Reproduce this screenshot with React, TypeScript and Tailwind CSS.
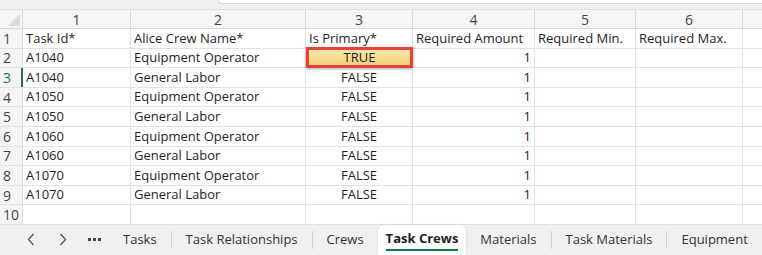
const cols = [
  { n: "1", w: "w-[108px]" },
  { n: "2", w: "w-[175px]" },
  { n: "3", w: "w-[107px]" },
  { n: "4", w: "w-[122px]" },
  { n: "5", w: "w-[101px]" },
  { n: "6", w: "w-[107px]" },
];

const rows = [
  ["Task Id*", "Alice Crew Name*", "Is Primary*", "Required Amount", "Required Min.", "Required Max."],
  ["A1040", "Equipment Operator", "TRUE", "1", "", ""],
  ["A1040", "General Labor", "FALSE", "1", "", ""],
  ["A1050", "Equipment Operator", "FALSE", "1", "", ""],
  ["A1050", "General Labor", "FALSE", "1", "", ""],
  ["A1060", "Equipment Operator", "FALSE", "1", "", ""],
  ["A1060", "General Labor", "FALSE", "1", "", ""],
  ["A1070", "Equipment Operator", "FALSE", "1", "", ""],
  ["A1070", "General Labor", "FALSE", "1", "", ""],
  ["", "", "", "", "", ""],
];

const tabs = ["Tasks", "Task Relationships", "Crews", "Task Crews", "Materials", "Task Materials", "Equipment"];

export default function App() {
  return (
    <div className="w-[762px] h-[255px] overflow-hidden bg-white text-[#1f1f1f] font-['Open_Sans',sans-serif] text-[13px] flex flex-col">
      {/* strip under the formula bar */}
      <div className="h-[10px] bg-[#f0f0f0] border-b border-[#e0e0e0] flex shrink-0">
        <div className="ml-[218px] flex-1 h-[4px] bg-white border-l border-b border-[#d6d6d6] rounded-bl-[6px]" />
      </div>

      {/* column headers */}
      <div className="flex h-[19px] bg-[#f5f5f5] border-b border-[#dadada] shrink-0">
        <div className="w-[23px] relative border-r border-[#dadada]">
          <div className="absolute right-[2px] bottom-[2px] w-0 h-0 border-l-[12px] border-l-transparent border-b-[12px] border-b-[#dcdcdc]" />
        </div>
        {cols.map((c) => (
          <div key={c.n} className={`${c.w} border-r border-[#dadada] flex items-center justify-center text-[#444] text-[14px]`}>
            {c.n}
          </div>
        ))}
        <div className="flex-1" />
      </div>

      {/* grid rows */}
      {rows.map((r, i) => (
        <div key={i} className="flex h-[19.6px] border-b border-[#e1e1e1] shrink-0">
          <div
            className={`w-[23px] bg-[#f5f5f5] flex items-center pl-[3px] text-[14px] ${
              i === 2 ? "text-[#217346] border-r-2 border-[#217346]" : "text-[#444] border-r border-[#dadada]"
            }`}
          >
            {i + 1}
          </div>
          {r.map((v, j) => (
            <div
              key={j}
              className={`${cols[j].w} border-r border-[#e1e1e1] flex items-center px-[3px] whitespace-nowrap relative ${
                i === 0 ? "" : j === 2 ? "justify-center" : j === 3 ? "justify-end" : ""
              }`}
            >
              {i === 1 && j === 2 ? (
                <div className="absolute left-[0px] right-[-1px] top-[-2px] bottom-[-1px] border-[3px] border-[#e8413c] shadow-[0_1px_3px_rgba(0,0,0,0.35)] flex items-center justify-center bg-[linear-gradient(#fbe6a9,#f5d27e)] text-[#1f1f1f]">
                  {v}
                </div>
              ) : (
                v
              )}
            </div>
          ))}
          <div className="flex-1" />
        </div>
      ))}

      {/* sheet tabs */}
      <div className="flex-1 bg-[#f0f0f0] flex items-stretch text-[13px] text-[#333] whitespace-nowrap">
        <div className="w-[15px] shrink-0" />
        <div className="w-[32px] shrink-0 flex items-center justify-center text-[#555]">
          <svg width="8" height="13" viewBox="0 0 8 13"><path d="M6.5 1 1.5 6.5 6.5 12" fill="none" stroke="currentColor" strokeWidth="1.3" /></svg>
        </div>
        <div className="w-[32px] shrink-0 flex items-center justify-center text-[#555]">
          <svg width="8" height="13" viewBox="0 0 8 13"><path d="M1.5 1 6.5 6.5 1.5 12" fill="none" stroke="currentColor" strokeWidth="1.3" /></svg>
        </div>
        <div className="w-[30px] shrink-0 flex items-center justify-center gap-[2px]">
          <span className="w-[3px] h-[3px] bg-[#444]" />
          <span className="w-[3px] h-[3px] bg-[#444]" />
          <span className="w-[3px] h-[3px] bg-[#444]" />
        </div>
        {tabs.map((t, i) => {
          const active = t === "Task Crews";
          const nextActive = tabs[i + 1] === "Task Crews";
          return (
            <div key={t} className="flex items-center shrink-0">
              {active ? (
                <div className="h-full bg-white rounded-t-[6px] px-[8px] flex flex-col items-center justify-center shadow-[0_0_2px_rgba(0,0,0,0.15)]">
                  <span className="font-bold text-[#222] leading-[18px]">{t}</span>
                  <span className="w-full h-[2px] bg-[#107c41] mt-[2px]" />
                </div>
              ) : (
                <span className="px-[14px]">{t}</span>
              )}
              {!active && !nextActive && i < tabs.length - 1 && <span className="w-px h-[18px] bg-[#d4d4d4]" />}
            </div>
          );
        })}
      </div>
    </div>
  );
}
